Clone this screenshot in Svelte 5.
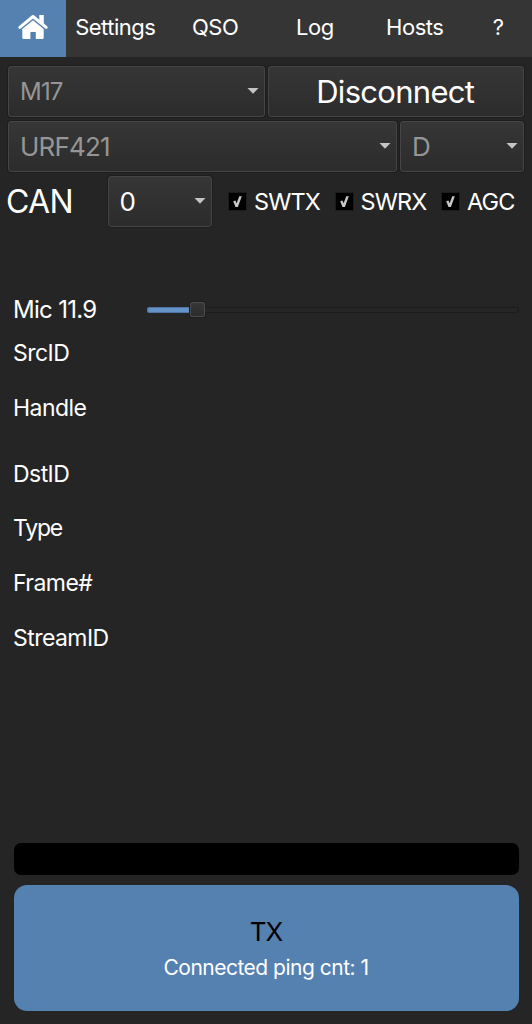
<script lang="ts">
	let tabs = ['Settings', 'QSO', 'Log', 'Hosts', '?'];
	let activeTab = $state('home');

	let toggles = $state([
		{ label: 'SWTX', checked: true },
		{ label: 'SWRX', checked: true },
		{ label: 'AGC', checked: true }
	]);

	let micGain = $state(11.9);
	let pingCount = $state(1);

	let fields = [
		{ id: 'src', label: 'SrcID' },
		{ id: 'handle', label: 'Handle' },
		{ id: 'dst', label: 'DstID' },
		{ id: 'type', label: 'Type' },
		{ id: 'frame', label: 'Frame#' },
		{ id: 'stream', label: 'StreamID' }
	];
</script>

{#snippet arrow()}
	<svg width="12" height="6" viewBox="0 0 12 6">
		<path d="M0.5 0h11L6 5.8z" fill="#c4c4c4" />
	</svg>
{/snippet}

<main>
	<nav>
		<button
			class="tab home"
			class:active={activeTab === 'home'}
			aria-label="Home"
			onclick={() => (activeTab = 'home')}
		>
			<svg width="32" height="26" viewBox="0 0 32 26">
				<path
					d="M2.8 13.3 16 2.5 29.2 13.3"
					fill="none"
					stroke="#fff"
					stroke-width="3"
					stroke-linecap="round"
					stroke-linejoin="round"
				/>
				<path d="M22.3 1h4.5v10l-4.5-3.7z" fill="#fff" />
				<path
					d="M16 6.2 26.7 15v8.8q0 1.3-1.3 1.3h-6.6v-7.2h-5.4v7.2H6.6q-1.3 0-1.3-1.3V15z"
					fill="#fff"
				/>
			</svg>
		</button>
		{#each tabs as tab}
			<button
				class="tab"
				class:narrow={tab === '?'}
				class:active={activeTab === tab}
				onclick={() => (activeTab = tab)}>{tab}</button
			>
		{/each}
	</nav>

	<section class="controls">
		<div class="row">
			<button class="box combo mode disabled"><span>M17</span>{@render arrow()}</button>
			<button class="box connect">Disconnect</button>
		</div>
		<div class="row">
			<button class="box combo host disabled"><span>URF421</span>{@render arrow()}</button>
			<button class="box combo module disabled"><span>D</span>{@render arrow()}</button>
		</div>
		<div class="row">
			<span class="can-label">CAN</span>
			<button class="box combo can"><span>0</span>{@render arrow()}</button>
			<div class="toggles">
				{#each toggles as toggle}
					<button
						class="toggle"
						role="checkbox"
						aria-checked={toggle.checked}
						onclick={() => (toggle.checked = !toggle.checked)}
					>
						<span class="check">
							{#if toggle.checked}
								<svg width="17" height="17" viewBox="0 0 17 17">
									<path d="M4.2 8.3 6.4 7.4 7.6 10.2 10.3 3.2 12.8 3.2 8.9 13.9 6.5 13.9z" fill="#c8c8c8" />
								</svg>
							{/if}
						</span>
						{toggle.label}
					</button>
				{/each}
			</div>
		</div>
	</section>

	<section class="info">
		<div class="mic">
			<span class="mic-label">Mic {micGain}</span>
			<div class="slider">
				<div class="fill" style="width: {micGain}%"></div>
				<div class="knob"></div>
				<div class="groove"></div>
			</div>
		</div>
		{#each fields as field}
			<div class="field {field.id}">{field.label}</div>
		{/each}
	</section>

	<footer>
		<div class="level"></div>
		<button class="tx">
			<span class="tx-title">TX</span>
			<span class="tx-status">Connected ping cnt: {pingCount}</span>
		</button>
	</footer>
</main>

<style>
	:global(body) {
		margin: 0;
		background: #252525;
	}

	main {
		display: flex;
		flex-direction: column;
		box-sizing: border-box;
		width: 532px;
		height: 1024px;
		background: #252525;
		color: #fff;
		font-family: Inter, 'Liberation Sans', sans-serif;
		overflow: hidden;
	}

	button {
		appearance: none;
		margin: 0;
		padding: 0;
		border: none;
		background: none;
		color: inherit;
		font-family: inherit;
		font-weight: 400;
		cursor: pointer;
		white-space: nowrap;
	}

	nav {
		display: flex;
		height: 57px;
		background: #353535;
		flex-shrink: 0;
	}

	.tab {
		flex: 3 0 0;
		min-width: 0;
		padding: 0 1px 3px 0;
		font-size: 22px;
		letter-spacing: -0.5px;
	}

	.home,
	.narrow {
		flex-grow: 2;
	}

	.home {
		padding: 0 0 3px;
	}

	.home svg {
		display: block;
		margin: 0 auto;
	}

	.active {
		background: #5581b1;
	}

	.controls {
		display: flex;
		flex-direction: column;
		gap: 4px;
		padding: 8.5px 8px 0;
	}

	.row {
		display: flex;
		align-items: center;
		gap: 3px;
		height: 51px;
	}

	.box {
		box-sizing: border-box;
		height: 51px;
		border: 1.5px solid #454545;
		border-radius: 3px;
		background: linear-gradient(#363636, #2c2c2c);
		box-shadow: 0 0 0 1px #1d1d1d;
	}

	.combo {
		display: flex;
		align-items: center;
		justify-content: space-between;
		padding: 0 5px 0 11px;
		font-size: 26px;
		letter-spacing: -0.8px;
	}

	.disabled {
		color: #969696;
	}

	.mode {
		width: 256.5px;
		font-size: 24px;
	}

	.connect {
		flex: 1;
		padding-right: 1px;
		font-size: 31px;
		letter-spacing: -0.7px;
	}

	.host {
		flex: 1;
	}

	.module {
		width: 124px;
	}

	.can-label {
		width: 98.5px;
		margin-left: -2px;
		font-size: 32px;
		letter-spacing: -0.7px;
	}

	.can {
		width: 104px;
	}

	.toggles {
		display: flex;
		justify-content: space-between;
		flex: 1;
		padding: 0 9.5px 0 14.5px;
	}

	.toggle {
		display: flex;
		align-items: center;
		gap: 8px;
		font-size: 23.5px;
		letter-spacing: -0.9px;
	}

	.check {
		width: 17px;
		height: 17px;
		background: #000;
		box-shadow: 0 0 0 1px #1c1c1c;
	}

	.check svg {
		display: block;
	}

	.info {
		display: flex;
		flex-direction: column;
		flex: 1;
		padding: 68px 13px 0;
	}

	.mic {
		display: flex;
		align-items: center;
		height: 30px;
		margin-bottom: 14.5px;
	}

	.mic-label {
		width: 134px;
		font-size: 24px;
		letter-spacing: -0.7px;
	}

	.slider {
		display: flex;
		align-items: center;
		flex: 1;
	}

	.fill {
		height: 6px;
		border-radius: 3px 0 0 3px;
		background: #6593c8;
		box-shadow: inset 0 0 0 1px #4f77a6;
	}

	.knob {
		box-sizing: border-box;
		width: 15px;
		height: 15px;
		margin-left: -1px;
		border: 1px solid #4c4c4c;
		border-radius: 2px;
		background: linear-gradient(#363636, #2d2d2d);
		box-shadow: 0 0 0 1px #1d1d1d;
	}

	.groove {
		box-sizing: border-box;
		flex: 1;
		height: 6px;
		border: 1px solid #1c1c1c;
		border-left: none;
		border-radius: 0 3px 3px 0;
		background: #262626;
	}

	.field {
		height: 28px;
		margin-bottom: 27px;
		line-height: 28px;
		font-size: 23px;
		letter-spacing: -0.55px;
	}

	.field.handle {
		margin-bottom: 37.6px;
	}

	.field.dst,
	.field.type,
	.field.frame {
		margin-bottom: 26.7px;
	}

	.field.type {
		letter-spacing: -1.2px;
	}

	footer {
		display: flex;
		flex-direction: column;
		gap: 10px;
		padding: 0 13.5px 13px;
	}

	.level {
		height: 32px;
		border-radius: 7px;
		background: #000;
	}

	.tx {
		display: flex;
		flex-direction: column;
		align-items: center;
		gap: 7px;
		box-sizing: border-box;
		height: 126px;
		padding-top: 31px;
		border-radius: 13px;
		background: #5581b1;
	}

	.tx-title {
		color: #000;
		font-size: 26px;
		line-height: 32px;
		letter-spacing: -0.9px;
	}

	.tx-status {
		font-size: 21px;
		line-height: 26px;
		letter-spacing: -0.5px;
	}
</style>
